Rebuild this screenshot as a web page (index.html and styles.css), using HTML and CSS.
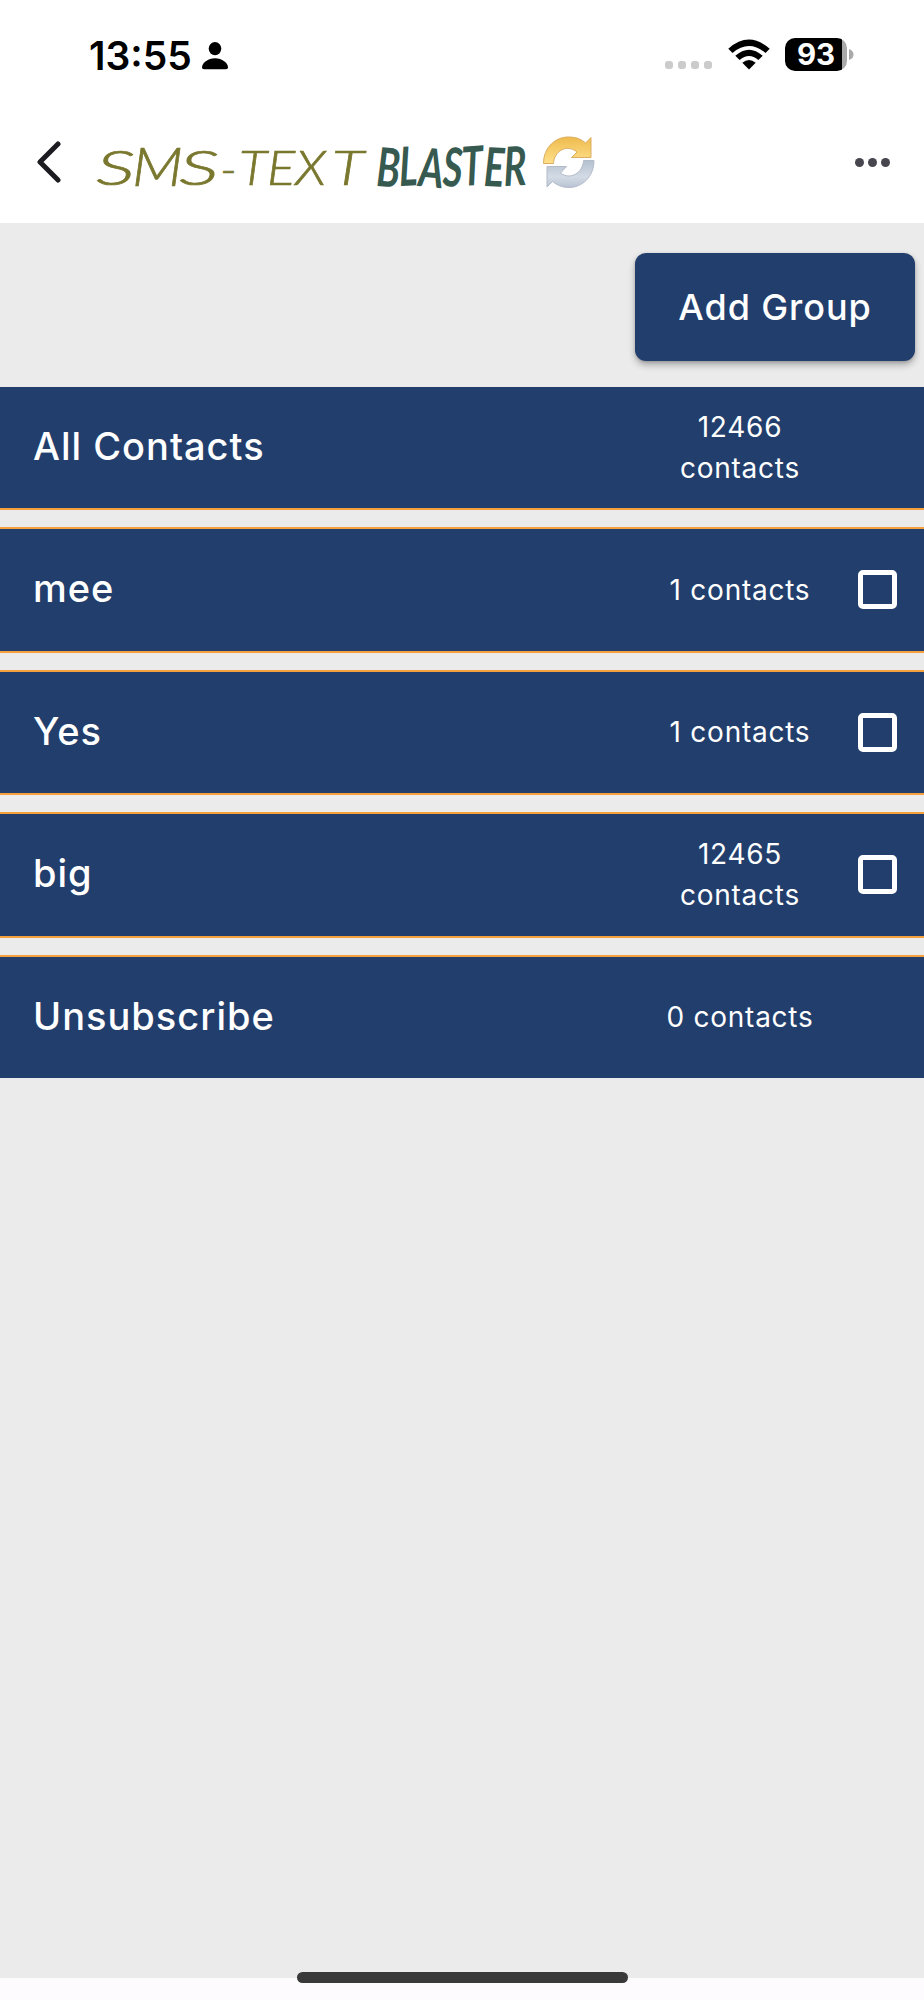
FILE: index.html
```html
<!DOCTYPE html>
<html lang="en">
<head>
<meta charset="utf-8">
<title>SMS-Text Blaster</title>
<link rel="stylesheet" href="styles.css">
</head>
<body>
<div class="screen">
  <div class="status">
    <span class="time">13:55</span>
    <svg class="person" width="28" height="30" viewBox="0 0 28 30"><ellipse cx="14" cy="7.6" rx="6.3" ry="6.6"/><path d="M14 17.2C21 17.2 27 21.8 27 26.5Q27 28.3 25 28.3H3Q1 28.3 1 26.5C1 21.8 7 17.2 14 17.2Z"/></svg>
    <div class="signal"><i></i><i></i><i></i><i></i></div>
    <svg class="wifi" width="44" height="32" viewBox="0 0 44 32">
      <path d="M1.3 9.7Q22-8.5 42.7 9.7L38.5 13.9Q22 .2 5.500 13.9Z"/>
      <path d="M8.300 16.700Q22 4.600 35.700 16.700L31.400 21Q22 13.200 12.600 21Z"/>
      <path d="M15.300 23.800Q22 18 28.700 23.800L22 30.500Z"/>
    </svg>
    <div class="battery"><span>93</span></div>
    <svg class="nub" width="5" height="12" viewBox="0 0 5 12"><path d="M0 0Q4.500 1.500 4.500 5.500T0 11Z"/></svg>
  </div>
  <header class="header">
    <svg class="back" width="24" height="42" viewBox="0 0 24 42"><path d="M21 3 3 21 21 39"/></svg>
    <svg class="logo" width="510" height="70" viewBox="90 130 510 70">
      <g class="thin">
        <text x="96" y="184.500" textLength="39" lengthAdjust="spacingAndGlyphs">S</text>
        <text class="tall" x="132" y="185.500" textLength="51" lengthAdjust="spacingAndGlyphs">M</text>
        <text x="179" y="184.500" textLength="40" lengthAdjust="spacingAndGlyphs">S</text>
        <text x="220" y="186" textLength="17" lengthAdjust="spacingAndGlyphs">-</text>
        <text x="239" y="184.500" textLength="87" lengthAdjust="spacingAndGlyphs">TEX</text>
        <text x="332" y="184.500" textLength="32" lengthAdjust="spacingAndGlyphs">T</text>
      </g>
      <text class="brush" x="376" y="186" textLength="151" lengthAdjust="spacingAndGlyphs" rotate="3 -2 4 2 -3 2 -2">BLASTER</text>
      <defs>
        <linearGradient id="gold" x1="0" y1="0" x2="0" y2="1"><stop offset="0" stop-color="#eebb4e"/><stop offset="1" stop-color="#ffe08a"/></linearGradient>
        <linearGradient id="steel" x1="0" y1="0" x2="0" y2="1"><stop offset="0" stop-color="#b3c0cf"/><stop offset=".6" stop-color="#d3dbe5"/><stop offset="1" stop-color="#b9c3d4"/></linearGradient>
      </defs>
      <path d="M543.500 163.500C543.500 147 556 137 568 137C576 137 581 139 585.500 143L591 137.500V157.500H571.500L577 152C567 143.500 554 151 553.500 163.500Z" fill="url(#gold)" stroke="#dcae62"/>
      <path d="M594 160.500C594 177 582 187.500 569 187.500C562 187.500 557 185 552.500 181.500L547 187V166.500H566.500L560.500 173C570 180.500 583 173 583.500 160.500Z" fill="url(#steel)" stroke="#b4bbc9"/>
    </svg>
    <div class="more"><i></i><i></i><i></i></div>
  </header>
  <main class="content">
    <div class="toolbar"><button class="add">Add Group</button></div>
    <div class="list">
      <div class="row"><span class="name">All Contacts</span><span class="count">12466<br>contacts</span></div>
      <div class="row"><span class="name">mee</span><span class="count">1 contacts</span><span class="check"></span></div>
      <div class="row"><span class="name">Yes</span><span class="count">1 contacts</span><span class="check"></span></div>
      <div class="row"><span class="name">big</span><span class="count">12465<br>contacts</span><span class="check"></span></div>
      <div class="row"><span class="name">Unsubscribe</span><span class="count">0 contacts</span></div>
    </div>
  </main>
  <footer class="bottom"><div class="home"></div></footer>
</div>
</body>
</html>
```
FILE: styles.css
```css
* { box-sizing: border-box; }
body { margin: 0; font-family: Inter, "Liberation Sans", sans-serif; }
.screen { width: 924px; height: 2000px; display: flex; flex-direction: column; background: #fff; overflow: hidden; }
.status { height: 100px; display: flex; align-items: flex-start; flex: none; }
.time { margin: 32px 0 0 89px; width: 112px; font-size: 39px; line-height: 47px; font-weight: 600; letter-spacing: 0; white-space: nowrap; }
.person { margin-top: 41px; flex: none; }
.signal { display: flex; gap: 5px; margin: 61px 0 0 436px; }
.signal i { width: 8px; height: 8px; border-radius: 3px; background: #cbcbcb; }
.wifi { margin: 38.500px 0 0 15px; flex: none; }
.battery { width: 62px; height: 32.500px; margin: 38px 0 0 14px; border-radius: 10px; background: linear-gradient(90deg, #000 57px, #a9a9a9 57px); color: #fff; display: flex; justify-content: center; align-items: center; font-size: 29.500px; font-weight: 700; flex: none; }
.nub { margin: 49px 0 0 2px; fill: #a9a9a9; flex: none; }
.header { height: 122.500px; flex: none; display: flex; align-items: flex-start; }
.back { margin: 41px 0 0 37px; fill: none; stroke: #1c1b20; stroke-width: 5; stroke-linecap: round; stroke-linejoin: round; flex: none; }
.logo { margin: 30px 0 0 29px; flex: none; }
.thin { font: italic 300 48px Lato, sans-serif; fill: #7a782f; stroke: #7a782f; stroke-width: .7px; }
.tall { font-size: 53px; }
.brush { font: italic 700 54px Lato, sans-serif; fill: #365950; }
.more { display: flex; gap: 4px; margin: 57.500px 0 0 255px; }
.more i { width: 9px; height: 9px; border-radius: 50%; background: #47464f; }
.content { flex: 1; background: #ebebeb; }
.toolbar { height: 164px; padding: 30.500px 9px 0 0; display: flex; justify-content: flex-end; }
.add { width: 280px; height: 107.500px; border: 0; border-radius: 11px; background: #223e6c; color: #fff; font: 530 36px/44px Inter, sans-serif; letter-spacing: .900px; box-shadow: 0 4px 7px rgba(0,0,0,.28), 0 1px 3px rgba(0,0,0,.15); }
.list { display: grid; gap: 17px; }
.row { height: 125.500px; display: flex; align-items: center; padding-left: 33px; background: #223e6c; color: #fff; border: solid #f5a03a; border-width: 2px 0; }
.row:first-child { border-top: 0; height: 123.500px; }
.row:last-child { border-bottom: 0; height: 123.200px; }
.name { width: 627px; font-size: 38px; font-weight: 530; letter-spacing: 1px; line-height: 48px; margin-top: -3px; }
.count { width: 160px; text-align: center; white-space: nowrap; font-size: 28px; line-height: 41px; letter-spacing: .750px; margin-top: 1px; }
.check { width: 39px; height: 39px; margin: 0 0 0 38px; border: 5px solid #fff; border-radius: 5px; }
.bottom { height: 22px; flex: none; background: #fdfbfd; display: flex; justify-content: center; }
.home { width: 331px; height: 11px; margin-top: -6px; border-radius: 6px; background: #393939; }
```
